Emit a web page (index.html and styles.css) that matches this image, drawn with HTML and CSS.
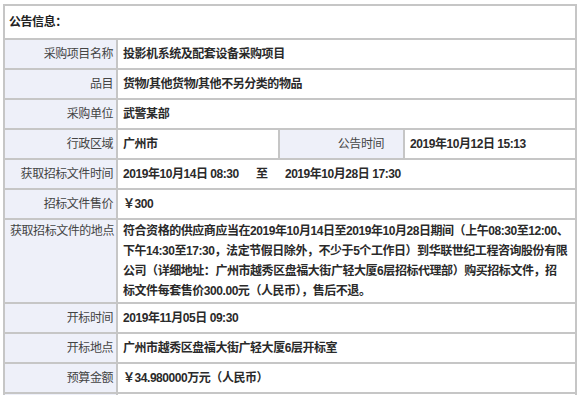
FILE: index.html
```html
<!DOCTYPE html>
<html lang="zh-CN">
<head>
<meta charset="utf-8">
<title>公告信息</title>
<link rel="stylesheet" href="styles.css">
</head>
<body>
<table class="info">
  <colgroup>
    <col class="c1"><col class="c2"><col class="c3"><col class="c4">
  </colgroup>
  <tr><td class="head" colspan="4">公告信息：</td></tr>
  <tr><td class="lab">采购项目名称</td><td class="val" colspan="3">投影机系统及配套设备采购项目</td></tr>
  <tr><td class="lab">品目</td><td class="val" colspan="3">货物/其他货物/其他不另分类的物品</td></tr>
  <tr><td class="lab">采购单位</td><td class="val" colspan="3">武警某部</td></tr>
  <tr><td class="lab">行政区域</td><td class="val">广州市</td><td class="lab inner">公告时间</td><td class="val">2019年10月12日 15:13</td></tr>
  <tr><td class="lab">获取招标文件时间</td><td class="val" colspan="3">2019年10月14日&nbsp;08:30&nbsp;&nbsp;&nbsp;&nbsp;&nbsp;&nbsp;至&nbsp;&nbsp;&nbsp;&nbsp;&nbsp;&nbsp;2019年10月28日&nbsp;17:30</td></tr>
  <tr><td class="lab">招标文件售价</td><td class="val" colspan="3">￥300</td></tr>
  <tr><td class="lab top">获取招标文件的地点</td><td class="val multi" colspan="3"><span class="ln">符合资格的供应商应当在2019年10月14日至2019年10月28日期间（上午08:30至12:00、</span><br><span class="ln">下午14:30至17:30，法定节假日除外，不少于5个工作日）到华联世纪工程咨询股份有限</span><br><span class="ln">公司（详细地址：广州市越秀区盘福大街广轻大厦6层招标代理部）购买招标文件，招</span><br><span class="ln">标文件每套售价300.00元（人民币），售后不退。</span></td></tr>
  <tr><td class="lab">开标时间</td><td class="val" colspan="3">2019年11月05日 09:30</td></tr>
  <tr><td class="lab">开标地点</td><td class="val" colspan="3">广州市越秀区盘福大街广轻大厦6层开标室</td></tr>
  <tr><td class="lab">预算金额</td><td class="val" colspan="3">￥34.980000万元（人民币）</td></tr>
  <tr><td class="lab">&nbsp;</td><td class="val" colspan="3">&nbsp;</td></tr>
</table>
</body>
</html>
```
FILE: styles.css
```css
html, body {
  background: #ffffff;
}
body {
  margin: 4px 0 0 3px;
  font-family: "Liberation Sans", "Noto Sans CJK SC", sans-serif;
  font-size: 12px;
  letter-spacing: -0.45px;
  color: #333333;
}
.info {
  width: 572px;
  table-layout: fixed;
  border-collapse: separate;
  border-spacing: 0;
  border: 1px solid #c6c6c6;
}
.c1 { width: 113px; }
.c2 { width: 162px; }
.c3 { width: 125px; }
.c4 { width: 172px; }
.info td {
  border: 1px solid #c6c6c6;
  line-height: 20px;
  padding: 4px 5px;
  vertical-align: middle;
  white-space: nowrap;
  overflow: hidden;
}
.info td.head {
  padding: 6px 4px;
  font-weight: bold;
  color: #222222;
  background: #ffffff;
}
.info td.lab {
  background: #eef0f9;
  text-align: right;
  padding-right: 3px;
  color: #444444;
}
.info td.inner {
  padding-right: 19px;
}
.info td.top {
  vertical-align: top;
  padding-top: 1px;
}
.info td.val {
  font-weight: bold;
  color: #2a2a2a;
  background: #ffffff;
}
.info td.multi {
  padding: 1px 2px 1px 5px;
}
.ln {
  white-space: nowrap;
}
```
